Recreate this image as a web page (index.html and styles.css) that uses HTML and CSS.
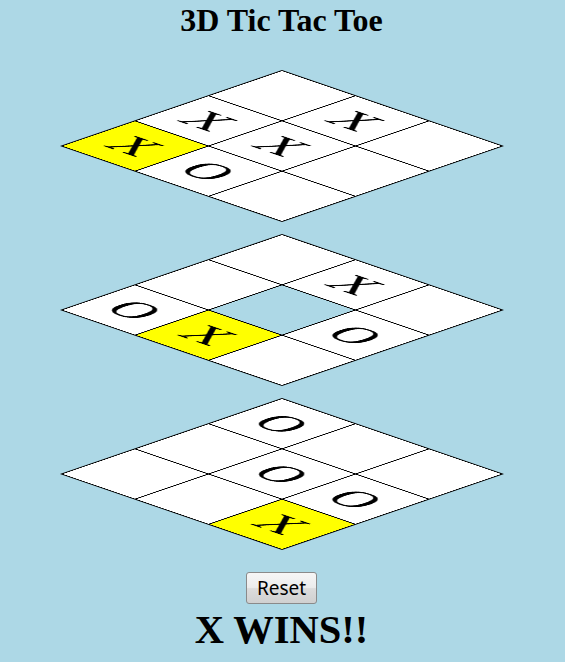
FILE: index.html
```html
<!DOCTYPE html>
<html>
<head>
    <title>3D Tic Tac Toe</title>
    <link rel="stylesheet" href="styles.css">
</head>
<body>

<h1 class="title">3D Tic Tac Toe</h1>

<div class="layer">
    <table class="board">
        <tr><td></td><td>X</td><td></td></tr>
        <tr><td>X</td><td>X</td><td></td></tr>
        <tr><td class="win">X</td><td>O</td><td></td></tr>
    </table>
</div>

<div class="layer">
    <table class="board">
        <tr><td></td><td>X</td><td></td></tr>
        <tr><td></td><td class="hole"></td><td>O</td></tr>
        <tr><td>O</td><td class="win">X</td><td></td></tr>
    </table>
</div>

<div class="layer">
    <table class="board">
        <tr><td>O</td><td></td><td></td></tr>
        <tr><td></td><td>O</td><td>O</td></tr>
        <tr><td></td><td></td><td class="win">X</td></tr>
    </table>
</div>

<div class="controls">
    <button class="reset" type="button">Reset</button>
</div>

<h1 class="result">X WINS!!</h1>

</body>
</html>
```

FILE: styles.css
```css
html, body {
    height: 100%;
    overflow: hidden;
}

body {
    margin: 0;
    padding: 0 2px 0 0;
    background: #add8e6;
    color: black;
    font-family: "Liberation Serif", serif;
    text-align: center;
}

.title {
    margin: 0;
    padding-top: 3px;
    height: 71px;
    box-sizing: border-box;
    font-size: 32px;
    line-height: 34px;
}

.layer {
    display: flex;
    justify-content: center;
    align-items: center;
    height: 150px;
    margin-bottom: 14px;
}

.board {
    flex: none;
    width: 310px;
    height: 310px;
    table-layout: fixed;
    border-collapse: collapse;
    transform: rotateX(70deg) rotate(45deg);
}

.board td {
    width: 102px;
    height: 102px;
    padding: 0;
    border: 2px solid black;
    background: white;
    font-size: 66px;
    line-height: 68px;
    text-align: center;
    -webkit-text-stroke: 0.3px black;
}

.board td.win {
    background: yellow;
}

.board td.hole {
    background: transparent;
}

.controls {
    padding-top: 9px;
}

.reset {
    width: 71px;
    height: 32px;
    padding: 0;
    border: 1px solid #8a8a8a;
    border-radius: 3px;
    background: linear-gradient(#f6f6f6 0%, #ececec 48%, #dcdcdc 52%, #d0d0d0 100%);
    color: black;
    font-family: "Noto Sans", sans-serif;
    font-size: 19px;
}

.result {
    margin: 2px 0 0;
    font-size: 40.5px;
    line-height: 48px;
}
```
